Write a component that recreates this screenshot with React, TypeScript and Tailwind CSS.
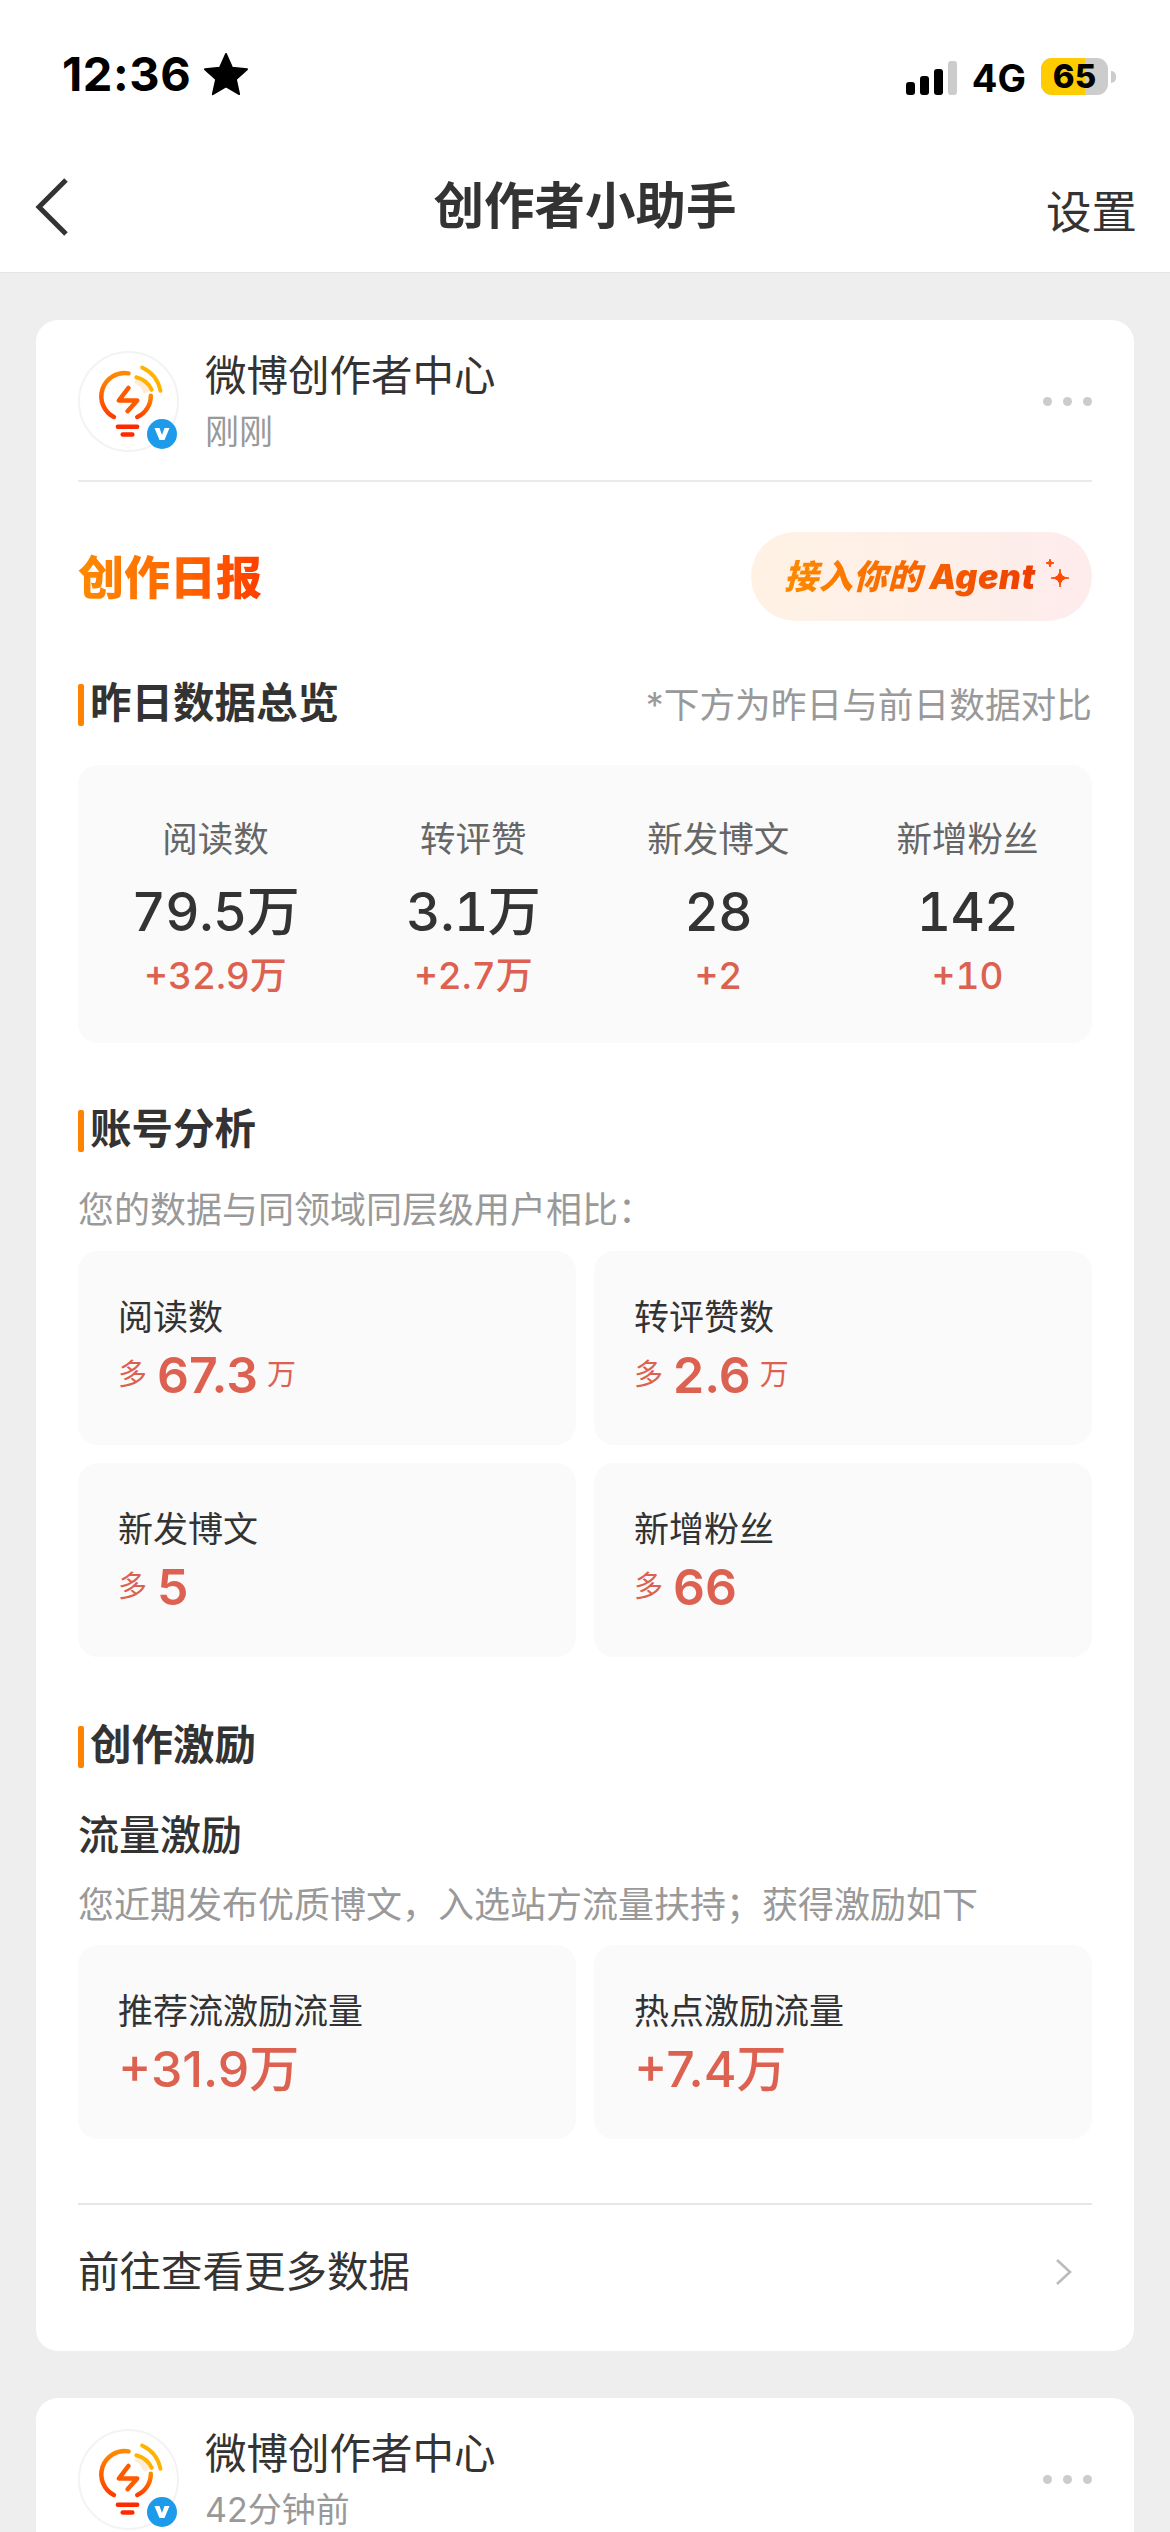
const FONT = 'font-["Inter","Noto_Sans_CJK_SC",sans-serif]';

function BulbLogo() {
  return (
    <svg viewBox="0 0 100 100" className="h-full w-full">
      <defs>
        <linearGradient id="bulb" x1="0" y1="0" x2="0" y2="1">
          <stop offset="0" stopColor="#ff8a00" />
          <stop offset="1" stopColor="#ff3d00" />
        </linearGradient>
      </defs>
      <path d="M58 25 A24 24 0 0 1 74 38 L66 42 A18 18 0 0 0 56 31 Z" fill="#fdecd6" />
      <path d="M35 66 A24 24 0 0 1 50 21" fill="none" stroke="url(#bulb)" strokeWidth="4.6" strokeLinecap="round" />
      <path d="M59 66 A24 24 0 0 0 73 44" fill="none" stroke="url(#bulb)" strokeWidth="4.6" strokeLinecap="round" />
      <path d="M50 36 L40 49 H59 L49 60" fill="none" stroke="#ff5a00" strokeWidth="4.6" strokeLinecap="round" strokeLinejoin="round" />
      <path d="M58 25 A24 24 0 0 1 74 38" fill="none" stroke="#ffb300" strokeWidth="4" strokeLinecap="round" />
      <path d="M64 15 A34 34 0 0 1 83 39" fill="none" stroke="#ffb300" strokeWidth="4" strokeLinecap="round" />
      <path d="M39 76 H59" stroke="#ff2a00" strokeWidth="4.5" strokeLinecap="round" />
      <path d="M44 84 H54" stroke="#ff2a00" strokeWidth="4.5" strokeLinecap="round" />
    </svg>
  );
}

function PostHeader({ time }: { time: string }) {
  return (
    <div className="flex items-center">
      <div className="relative h-[101px] w-[101px] shrink-0 rounded-full border-2 border-[#f3f3f3]">
        <BulbLogo />
        <div className="absolute right-0 bottom-[1px] flex h-[30px] w-[30px] items-center justify-center rounded-full bg-[#1d9bea]">
          <svg viewBox="0 0 20 20" className="h-[20px] w-[20px]">
            <path d="M2.5 4 H7.5 L10 11 L12.5 4 H17.5 L12.5 16 H7.5 Z" fill="#fff" />
          </svg>
        </div>
      </div>
      <div className="ml-[26px] flex-1">
        <div className="text-[41.5px] leading-[50px] text-[#333]">微博创作者中心</div>
        <div className="mt-[11px] text-[34px] leading-[40px] text-[#999]">{time}</div>
      </div>
      <div className="flex gap-[11px]">
        <span className="h-[9px] w-[9px] rounded-full bg-[#ccc]" />
        <span className="h-[9px] w-[9px] rounded-full bg-[#ccc]" />
        <span className="h-[9px] w-[9px] rounded-full bg-[#ccc]" />
      </div>
    </div>
  );
}

function SectionTitle({ children }: { children: string }) {
  return (
    <div className="flex items-center">
      <span className="h-[42px] w-[6px] rounded-[2px] bg-[#ff8200]" />
      <span className="mb-[3px] ml-[6px] text-[41.5px] leading-[47px] font-semibold text-[#333]">{children}</span>
    </div>
  );
}

const overview = [
  { label: '阅读数', value: '79.5', unit: '万', delta: '+32.9', deltaUnit: '万' },
  { label: '转评赞', value: '3.1', unit: '万', delta: '+2.7', deltaUnit: '万' },
  { label: '新发博文', value: '28', unit: '', delta: '+2', deltaUnit: '' },
  { label: '新增粉丝', value: '142', unit: '', delta: '+10', deltaUnit: '' },
];

const analysis = [
  { label: '阅读数', value: '67.3', unit: '万' },
  { label: '转评赞数', value: '2.6', unit: '万' },
  { label: '新发博文', value: '5', unit: '' },
  { label: '新增粉丝', value: '66', unit: '' },
];

function AnalysisCard({ label, value, unit }: { label: string; value: string; unit: string }) {
  return (
    <div className="h-[194px] rounded-[20px] bg-[#fafafa] px-[40px] pt-[44px]">
      <div className="text-[35px] leading-[44px] text-[#333]">{label}</div>
      <div className="mt-[6px] flex items-center text-[#dd6150]">
        <span className="text-[29px]">多</span>
        <span className="ml-[10px] text-[50px] leading-[60px] font-semibold">{value}</span>
        {unit && <span className="ml-[9px] text-[29px]">{unit}</span>}
      </div>
    </div>
  );
}

function IncentiveCard({ label, value, unit }: { label: string; value: string; unit: string }) {
  return (
    <div className="h-[194px] rounded-[20px] bg-[#fafafa] px-[40px] pt-[44px]">
      <div className="text-[35px] leading-[44px] text-[#333]">{label}</div>
      <div className="mt-[6px] text-[50px] leading-[60px] font-medium text-[#dd6150]">
        {value}
        {unit}
      </div>
    </div>
  );
}

export default function App() {
  return (
    <div className={`h-[2532px] w-[1170px] overflow-hidden bg-[#eeeeee] ${FONT}`}>
      {/* Status bar + nav */}
      <header className="h-[273px] border-b border-[#e4e4e4] bg-white">
        <div className="flex h-[150px] items-start justify-between pt-[50px] pr-[54px] pl-[62px]">
          <div className="flex items-center">
            <span className="text-[47px] leading-[48px] font-bold tracking-[0.6px] text-black">12:36</span>
            <svg viewBox="0 0 24 24" className="ml-[12px] h-[44px] w-[46px]">
              <path d="M12 1 L15.4 8.6 L23.5 9.4 L17.4 14.9 L19.2 23 L12 18.8 L4.8 23 L6.6 14.9 L0.5 9.4 L8.6 8.6 Z" fill="#000" stroke="#000" strokeLinejoin="round" />
            </svg>
          </div>
          <div className="flex items-center">
            <svg viewBox="0 0 51 34" className="mt-[7px] h-[34px] w-[51px]">
              <rect x="0" y="21" width="9" height="13" rx="3" fill="#000" />
              <rect x="14" y="15" width="9" height="19" rx="3" fill="#000" />
              <rect x="28" y="8" width="9" height="26" rx="3" fill="#000" />
              <rect x="42" y="0" width="9" height="34" rx="3" fill="#ccc" />
            </svg>
            <span className="mt-[8px] ml-[15px] text-[38px] leading-[40px] font-bold text-black">4G</span>
            <div className="relative mt-[5px] ml-[15px] h-[37px] w-[67px] rounded-[11px] bg-[#ccc]">
              <div className="h-full w-[44px] rounded-l-[11px] bg-[#ffcc00]" />
              <span className="absolute inset-0 text-center text-[33px] leading-[37px] font-extrabold text-black">65</span>
            </div>
            <span className="mt-[5px] ml-[3px] h-[12px] w-[5px] rounded-r-full bg-[#ccc]" />
          </div>
        </div>
        <div className="relative flex h-[122px] items-center justify-center">
          <svg viewBox="0 0 34 58" className="absolute top-[28px] left-[35px] h-[58px] w-[34px]">
            <path d="M31 2 L4 29 L31 56" fill="none" stroke="#333" strokeWidth="5" />
          </svg>
          <span className="mb-[10px] text-[50.5px] font-bold text-[#333]">创作者小助手</span>
          <span className="absolute top-[35px] right-[33px] text-[45.5px] leading-[56px] text-[#333]">设置</span>
        </div>
      </header>

      <main className="flex flex-col gap-[47px] px-[36px] pt-[47px]">
        <section className="h-[2031px] rounded-[22px] bg-white px-[42px] pt-[31px]">
          <PostHeader time="刚刚" />
          <div className="mt-[28px] h-[2px] bg-[#eaeaea]" />

          <div className="mt-[50px] flex items-center justify-between">
            <span className="mt-[1px] bg-gradient-to-r from-[#ff8a00] to-[#ff3d00] bg-clip-text text-[46px] font-black text-transparent">创作日报</span>
            <div className="flex h-[89px] w-[341px] items-center rounded-full bg-gradient-to-r from-[#fff2e4] to-[#fdecec] pl-[33px]">
              <span className="bg-gradient-to-r from-[#ff8a00] to-[#ee3c00] bg-clip-text text-[34px] font-black tracking-[0.5px] text-transparent italic">接入你的 Agent</span>
              <svg viewBox="0 0 28 30" className="mb-[8px] ml-[7px] h-[30px] w-[28px]">
                <path d="M7 1 Q7 5 11 5 Q7 5 7 9 Q7 5 3 5 Q7 5 7 1Z" fill="#ff4a00" stroke="#ff4a00" />
                <path d="M17 11 Q17 20 26 20 Q17 20 17 29 Q17 20 8 20 Q17 20 17 11Z" fill="#ff4a00" stroke="#ff4a00" />
              </svg>
            </div>
          </div>

          <div className="mt-[57px] flex items-center justify-between">
            <SectionTitle>昨日数据总览</SectionTitle>
            <span className="text-[35.7px] leading-[54px] text-[#999]">*下方为昨日与前日数据对比</span>
          </div>

          <div className="mt-[33px] flex h-[278px] items-start justify-around rounded-[20px] bg-[#fafafa] pt-[53px]">
            {overview.map((s) => (
              <div key={s.label} className="flex flex-col items-center">
                <div className="text-[35.5px] leading-[44px] text-[#666]">{s.label}</div>
                <div className="mt-[20px] text-[53px] leading-[60px] font-medium tracking-[-0.5px] text-[#333] tabular-nums">
                  {s.value}
                  {s.unit}
                </div>
                <div className="mt-[12px] text-[37px] leading-[44px] font-medium text-[#dd6150] tabular-nums">
                  {s.delta}
                  {s.deltaUnit}
                </div>
              </div>
            ))}
          </div>

          <div className="mt-[63px]">
            <SectionTitle>账号分析</SectionTitle>
          </div>
          <div className="mt-[32px] text-[36px] leading-[44px] text-[#999]">您的数据与同领域同层级用户相比：</div>
          <div className="mt-[19px] grid grid-cols-2 gap-[18px]">
            {analysis.map((a) => (
              <AnalysisCard key={a.label} {...a} />
            ))}
          </div>

          <div className="mt-[65px]">
            <SectionTitle>创作激励</SectionTitle>
          </div>
          <div className="mt-[38px] text-[41px] leading-[50px] font-medium text-[#333]">流量激励</div>
          <div className="mt-[23px] text-[36px] leading-[44px] text-[#999]">您近期发布优质博文，入选站方流量扶持；获得激励如下</div>
          <div className="mt-[18px] grid grid-cols-2 gap-[18px]">
            <IncentiveCard label="推荐流激励流量" value="+31.9" unit="万" />
            <IncentiveCard label="热点激励流量" value="+7.4" unit="万" />
          </div>

          <div className="mt-[64px] h-[2px] bg-[#e6e6e6]" />
          <div className="flex h-[134px] items-center justify-between">
            <span className="text-[41.5px] text-[#333]">前往查看更多数据</span>
            <svg viewBox="0 0 17 28" className="mr-[20px] h-[28px] w-[17px]">
              <path d="M2 2 L15 14 L2 26" fill="none" stroke="#bbb" strokeWidth="2.6" />
            </svg>
          </div>
        </section>

        <section className="h-[200px] rounded-[22px] bg-white px-[42px] pt-[31px]">
          <PostHeader time="42分钟前" />
        </section>
      </main>
    </div>
  );
}
